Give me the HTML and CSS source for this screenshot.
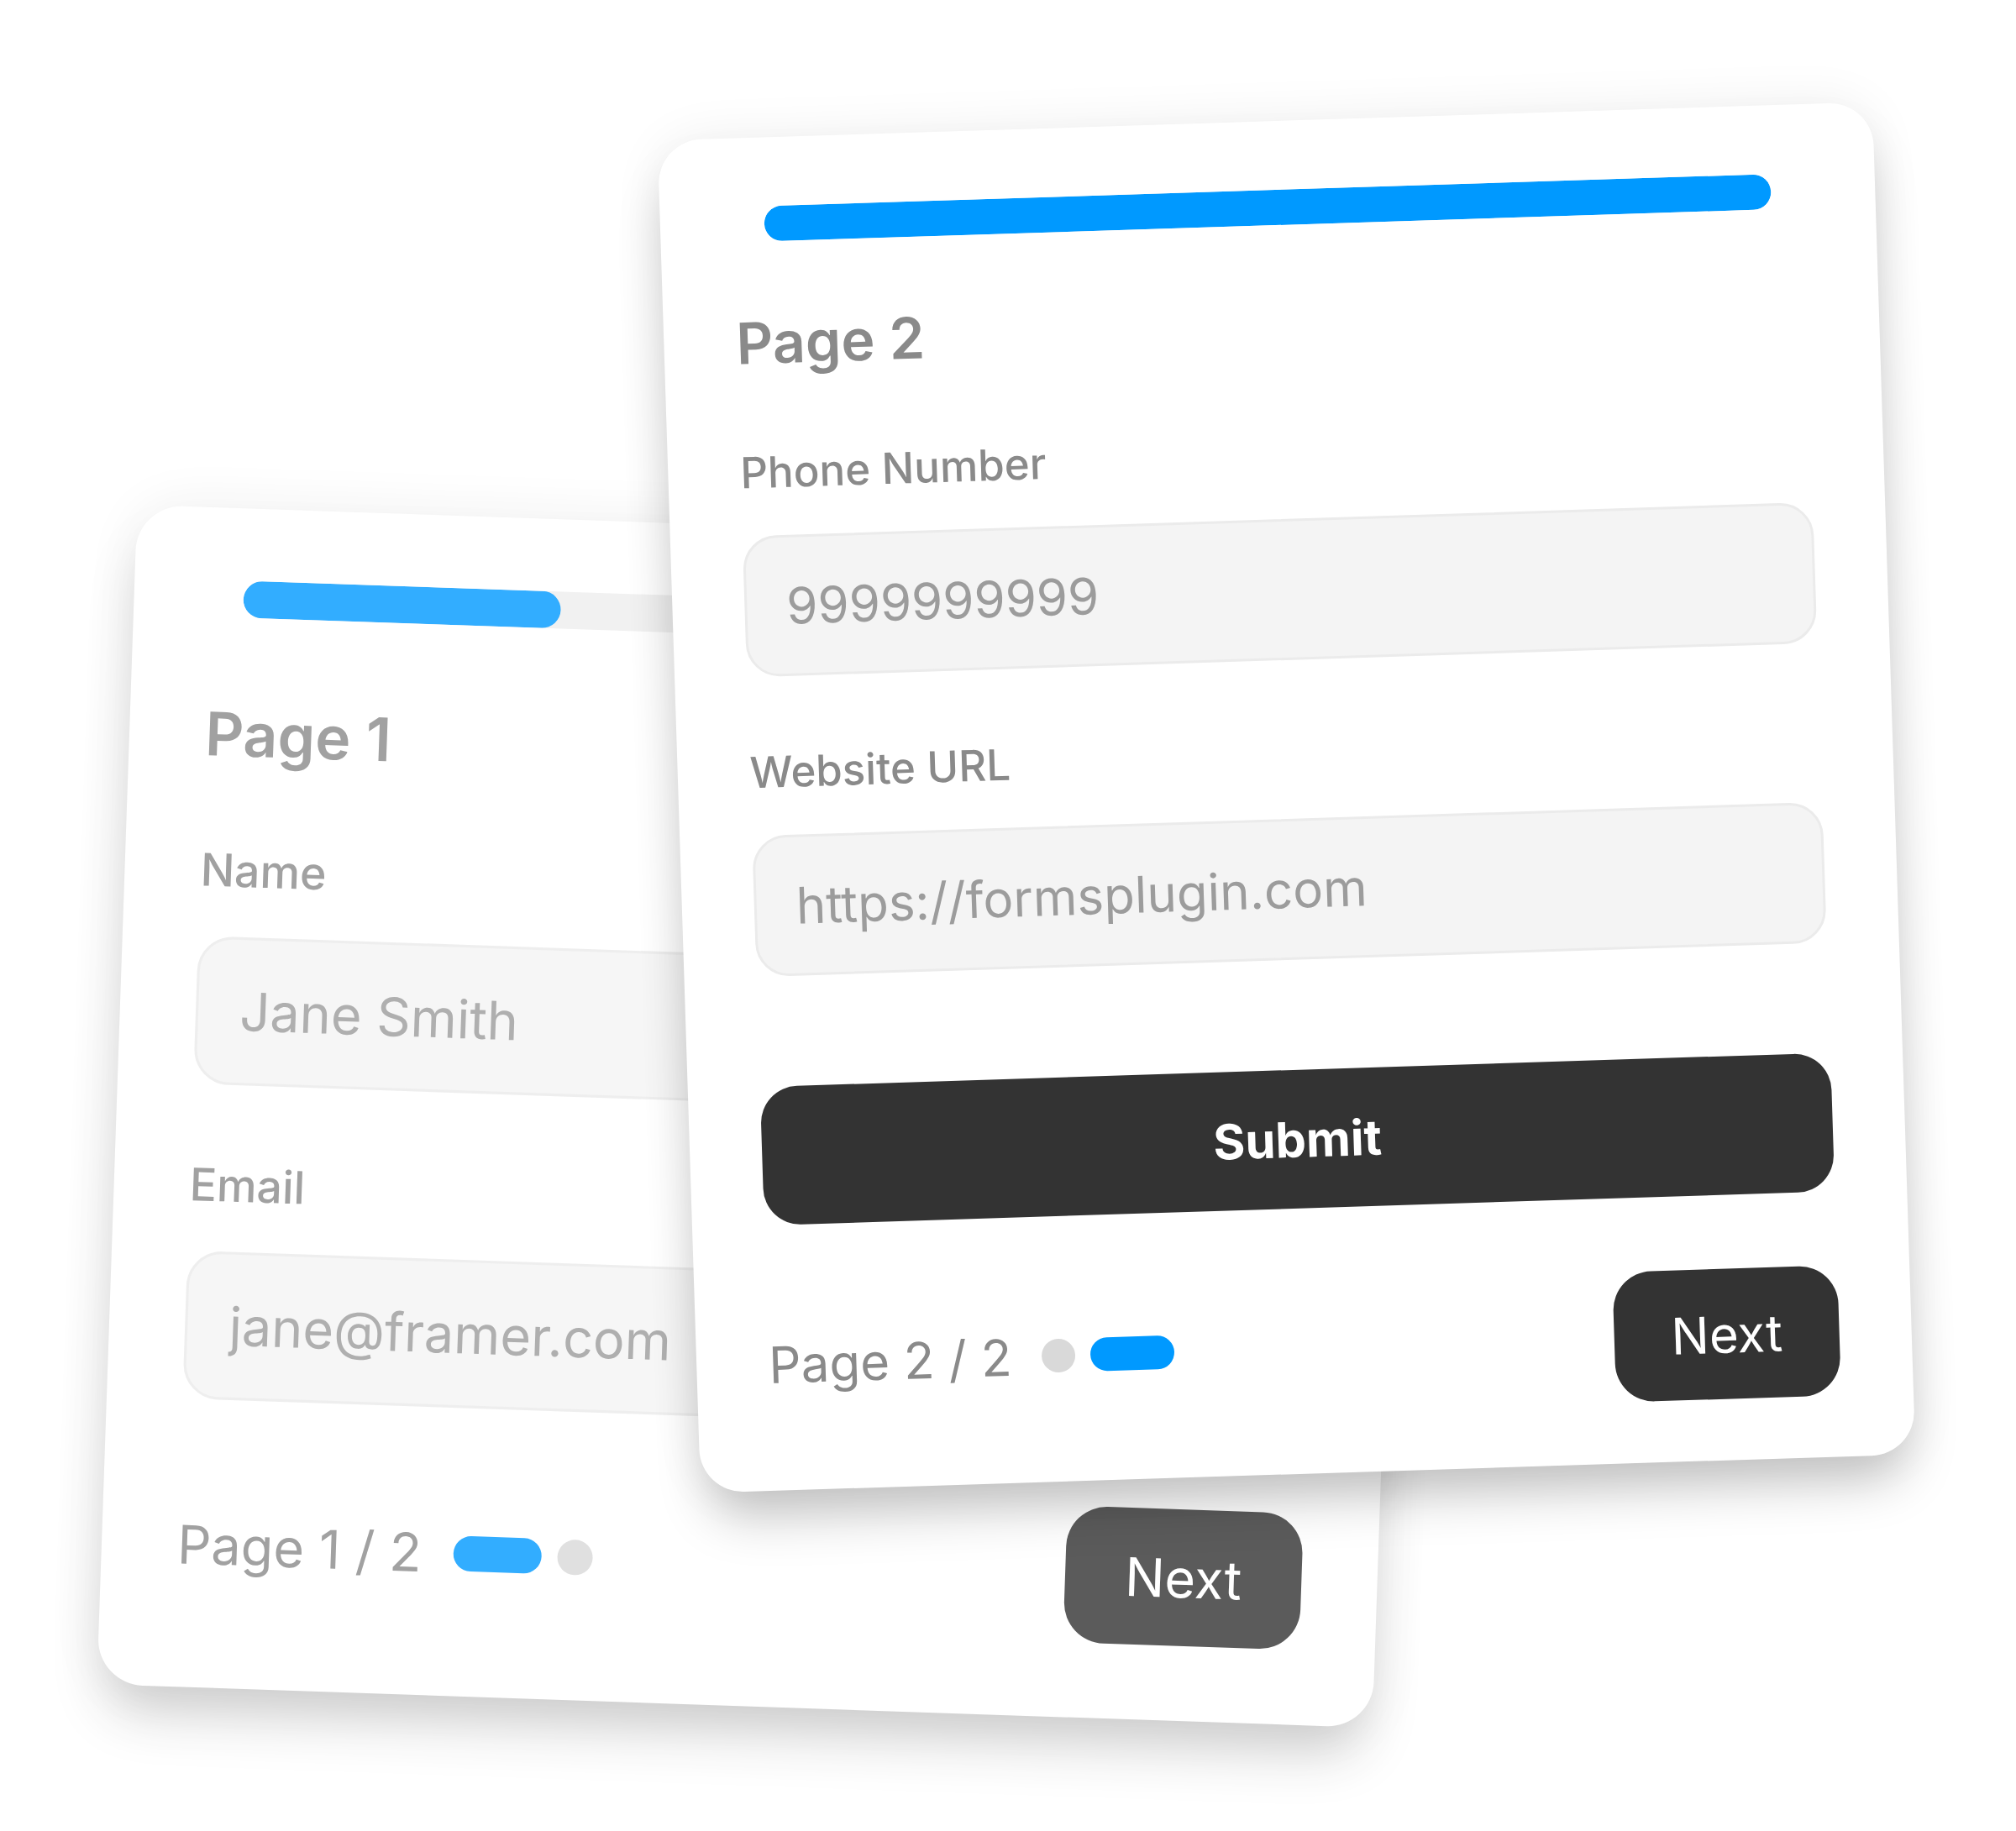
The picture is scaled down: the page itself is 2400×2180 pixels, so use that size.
FILE: index.html
```html
<!DOCTYPE html>
<html lang="en">
<head>
    <meta charset="UTF-8">
    <title>Multi-page Form</title>
    <link rel="stylesheet" href="styles.css">
</head>
<body>
    <div class="stage">
        <!-- page 1, sitting behind -->
        <div class="card card-back">
            <div class="progress">
                <div class="progress-fill" style="width: 30%"></div>
            </div>
            <h2 class="card-title">Page 1</h2>

            <div class="field">
                <label class="field-label">Name</label>
                <input type="text" class="field-input" placeholder="Jane Smith">
            </div>

            <div class="field">
                <label class="field-label">Email</label>
                <input type="email" class="field-input" placeholder="jane@framer.com">
            </div>

            <div class="card-footer">
                <div class="pager">
                    <span class="pager-text">Page 1 / 2</span>
                    <span class="pager-pill"></span>
                    <span class="pager-dot"></span>
                </div>
                <button class="btn btn-next">Next</button>
            </div>
        </div>

        <!-- page 2, in front -->
        <div class="card card-front">
            <div class="progress">
                <div class="progress-fill" style="width: 100%"></div>
            </div>
            <h2 class="card-title">Page 2</h2>

            <div class="field">
                <label class="field-label">Phone Number</label>
                <input type="tel" class="field-input" placeholder="9999999999">
            </div>

            <div class="field">
                <label class="field-label">Website URL</label>
                <input type="url" class="field-input" placeholder="https://formsplugin.com">
            </div>

            <button class="btn btn-submit">Submit</button>

            <div class="card-footer">
                <div class="pager">
                    <span class="pager-text">Page 2 / 2</span>
                    <span class="pager-dot"></span>
                    <span class="pager-pill"></span>
                </div>
                <button class="btn btn-next">Next</button>
            </div>
        </div>
    </div>
</body>
</html>
```

FILE: styles.css
```css
* {
    margin: 0;
    padding: 0;
    box-sizing: border-box;
    font-family: Inter, 'Liberation Sans', Arial, sans-serif;
}

body {
    background: #ffffff;
    width: 2400px;
    height: 2180px;
    overflow: hidden;
}

.stage {
    position: relative;
    width: 2400px;
    height: 2180px;
}

.card {
    position: absolute;
    width: 1447px;
    padding: 82px 86px 73px;
    background: #ffffff;
    border-radius: 52px;
    display: flex;
    flex-direction: column;
    box-shadow: 0 0 60px rgba(0, 0, 0, 0.07), 0 40px 60px -10px rgba(0, 0, 0, 0.22);
}

.card-back {
    left: 175px;
    top: 660px;
    padding-bottom: 85px;
    opacity: 0.8;
    transform: rotate(1.96deg) scale(1.05);
}

.card-front {
    left: 808px;
    top: 144px;
    z-index: 2;
    transform: rotate(-1.83deg);
}

.progress {
    height: 42px;
    margin: 0 38px;
    background: #eeeeee;
    border-radius: 21px;
    overflow: hidden;
}

.progress-fill {
    height: 100%;
    background: #0099ff;
    border-radius: 21px;
}

.card-title {
    margin-top: 86px;
    font-size: 68px;
    line-height: 1;
    font-weight: 600;
    color: #8a8a8a;
}

.card-back .card-title {
    margin-top: 98px;
}

.field {
    display: flex;
    flex-direction: column;
    gap: 50px;
    margin-top: 95px;
}

.field + .field {
    margin-top: 88px;
}

.field-label {
    font-size: 51px;
    line-height: 1;
    font-weight: 500;
    color: #8a8a8a;
}

.field-input {
    height: 168px;
    width: 100%;
    padding: 0 47px;
    border: 3px solid #ebebeb;
    border-radius: 40px;
    background: #f4f4f4;
    font-size: 60px;
    color: #333;
    outline: none;
}

.field-input::placeholder {
    color: #9c9c9c;
}

.btn {
    border: none;
    background: #333333;
    color: #ffffff;
    font-size: 60px;
    line-height: 1;
    cursor: pointer;
}

.btn-submit {
    margin-top: 131px;
    height: 165px;
    border-radius: 44px;
    font-size: 58px;
    font-weight: 700;
}

.card-footer {
    margin-top: 88px;
    display: flex;
    justify-content: space-between;
    align-items: center;
}

.card-back .card-footer {
    margin-top: 87px;
}

.pager {
    display: flex;
    align-items: center;
    gap: 18px;
}

.pager-text {
    font-size: 60px;
    line-height: 1;
    color: #8a8a8a;
    margin-right: 18px;
}

.pager-dot {
    width: 40px;
    height: 40px;
    border-radius: 50%;
    background: #d9d9d9;
}

.pager-pill {
    width: 100px;
    height: 40px;
    border-radius: 20px;
    background: #0099ff;
}

.btn-next {
    width: 268px;
    height: 155px;
    border-radius: 46px;
    font-weight: 400;
}
```
